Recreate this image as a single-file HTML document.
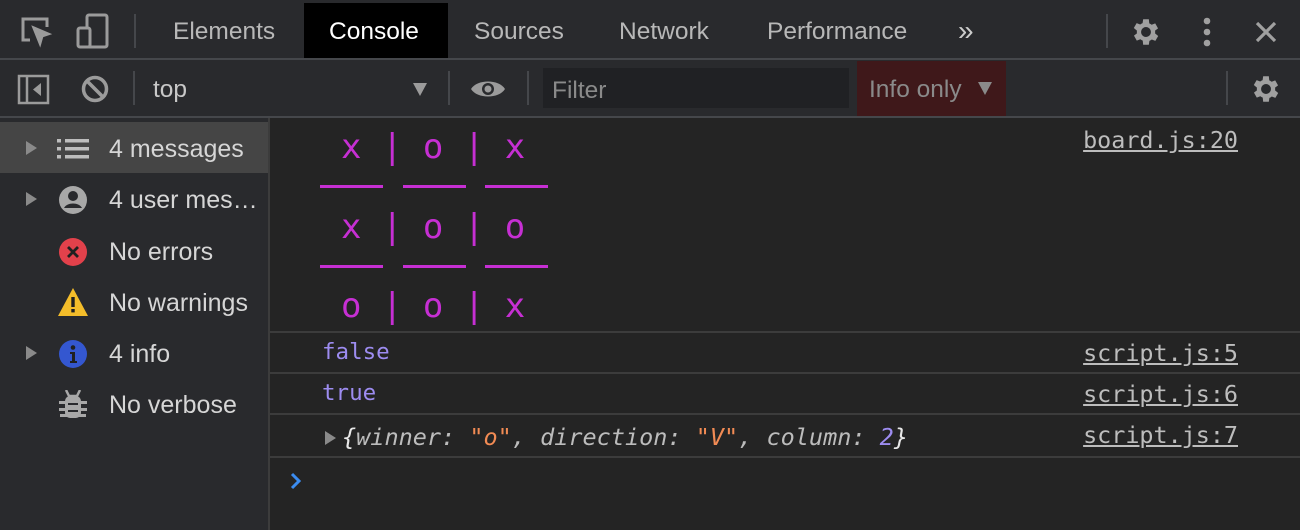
<!DOCTYPE html>
<html><head><meta charset="utf-8"><style>
*{margin:0;padding:0;box-sizing:border-box}
body{width:1300px;height:530px;background:#242424;font-family:"Liberation Sans",sans-serif;position:relative;overflow:hidden;color:#ccc}
.a{position:absolute;white-space:pre}
.mono{font-family:"DejaVu Sans Mono","Liberation Mono",monospace}
.tab{font-size:24.5px;color:#b8b8b8;top:18px}
.hl{position:absolute;left:0;width:1300px;height:2px;background:#45474b}
.cl{position:absolute;left:270px;width:1030px;height:2px;background:#3c3c3c}
.side{font-size:25px;color:#d6d6d6}
.tri{position:absolute;width:0;height:0;border-top:7px solid transparent;border-bottom:7px solid transparent;border-left:11px solid #8a8a8a}
.link{font-size:23.4px;color:#bdbdbd;text-decoration:underline;right:62px}
.b{font-size:34px;color:#c62fd3}
.ul{position:absolute;height:3px;background:#c62fd3}
</style></head><body>
<div class="a" style="left:0;top:0;width:1300px;height:59px;background:#292a2d"></div>
<div class="a" style="left:304px;top:3px;width:144px;height:56px;background:#000"></div>
<div class="hl" style="top:58px"></div>
<div class="a" style="left:0;top:60px;width:1300px;height:57px;background:#292a2d"></div>
<div class="hl" style="top:116px"></div>
<svg class="a" style="left:18px;top:14px" width="36" height="36" viewBox="0 0 36 36" fill="none" stroke="#9b9b9b" stroke-width="3"><path d="M12 26H5V5h24v8"/><path d="M16 14l14 6-6 2-2 7z" fill="#9b9b9b"/></svg>
<svg class="a" style="left:75px;top:13px" width="36" height="38" viewBox="0 0 36 38" fill="none" stroke="#9b9b9b" stroke-width="3"><rect x="12" y="2" width="20" height="32" rx="2"/><rect x="3" y="15" width="12" height="19" rx="2" fill="#292a2d"/></svg>
<div class="a" style="left:134px;top:14px;width:2px;height:34px;background:#45474b"></div>
<div class="a tab" style="left:173px">Elements</div>
<div class="a tab" style="left:329px;color:#fff">Console</div>
<div class="a tab" style="left:474px">Sources</div>
<div class="a tab" style="left:619px">Network</div>
<div class="a tab" style="left:767px">Performance</div>
<div class="a" style="left:958px;top:15px;font-size:28px;color:#ccc">»</div>
<div class="a" style="left:1106px;top:14px;width:2px;height:34px;background:#45474b"></div>
<svg class="a" style="left:1129px;top:15px" width="34" height="34" viewBox="0 0 24 24"><path fill="#a0a0a0" d="M19.4 13a7.5 7.5 0 000-2l2.1-1.6-2-3.5-2.5 1a7 7 0 00-1.7-1L15 3h-4l-.4 2.7a7 7 0 00-1.7 1l-2.5-1-2 3.5L6.6 11a7.5 7.5 0 000 2l-2.1 1.6 2 3.5 2.5-1a7 7 0 001.7 1L11 21h4l.4-2.7a7 7 0 001.7-1l2.5 1 2-3.5zM13 15.5a3.5 3.5 0 110-7 3.5 3.5 0 010 7z" transform="translate(-1 0)"/></svg>
<svg class="a" style="left:1200px;top:16px" width="14" height="32"><circle cx="7" cy="5" r="3.3" fill="#a0a0a0"/><circle cx="7" cy="16" r="3.3" fill="#a0a0a0"/><circle cx="7" cy="27" r="3.3" fill="#a0a0a0"/></svg>
<svg class="a" style="left:1254px;top:20px" width="24" height="24" stroke="#a0a0a0" stroke-width="3.2"><path d="M3 3L21 21M21 3L3 21"/></svg>
<svg class="a" style="left:17px;top:74px" width="34" height="32" fill="none" stroke="#9b9b9b" stroke-width="2.5"><rect x="2" y="2" width="29" height="27"/><path d="M10 2v27"/><path d="M24 9l-8 6.5 8 6.5z" fill="#9b9b9b" stroke="none"/></svg>
<svg class="a" style="left:80px;top:74px" width="30" height="30" fill="none" stroke="#9b9b9b" stroke-width="3.5"><circle cx="15" cy="15" r="11.5"/><path d="M7 7l16 16"/></svg>
<div class="a" style="left:133px;top:71px;width:2px;height:34px;background:#45474b"></div>
<div class="a" style="left:153px;top:76px;font-size:24.5px;color:#c8c8c8">top</div>
<div class="a" style="left:413px;top:83px;border-left:7px solid transparent;border-right:7px solid transparent;border-top:13px solid #9b9b9b"></div>
<div class="a" style="left:448px;top:71px;width:2px;height:34px;background:#45474b"></div>
<svg class="a" style="left:470px;top:76px" width="36" height="26"><path d="M1 13C7 3 29 3 35 13 29 23 7 23 1 13z" fill="#9b9b9b"/><circle cx="18" cy="13" r="6" fill="#292a2d"/><circle cx="18" cy="13" r="3.5" fill="#9b9b9b"/></svg>
<div class="a" style="left:527px;top:71px;width:2px;height:34px;background:#45474b"></div>
<div class="a" style="left:543px;top:68px;width:306px;height:40px;background:#202124"></div>
<div class="a" style="left:552px;top:77px;font-size:24.5px;color:#8a8a8a">Filter</div>
<div class="a" style="left:857px;top:61px;width:149px;height:55px;background:#3f181a"></div>
<div class="a" style="left:869px;top:76px;font-size:24.5px;color:#8a8a8a">Info only</div>
<div class="a" style="left:978px;top:82px;border-left:7px solid transparent;border-right:7px solid transparent;border-top:13px solid #8a8a8a"></div>
<div class="a" style="left:1226px;top:71px;width:2px;height:34px;background:#45474b"></div>
<svg class="a" style="left:1249px;top:72px" width="34" height="34" viewBox="0 0 24 24"><path fill="#a0a0a0" d="M19.4 13a7.5 7.5 0 000-2l2.1-1.6-2-3.5-2.5 1a7 7 0 00-1.7-1L15 3h-4l-.4 2.7a7 7 0 00-1.7 1l-2.5-1-2 3.5L6.6 11a7.5 7.5 0 000 2l-2.1 1.6 2 3.5 2.5-1a7 7 0 001.7 1L11 21h4l.4-2.7a7 7 0 001.7-1l2.5 1 2-3.5zM13 15.5a3.5 3.5 0 110-7 3.5 3.5 0 010 7z" transform="translate(-1 0)"/></svg>
<div class="a" style="left:0;top:118px;width:268px;height:412px;background:#292a2d"></div>
<div class="a" style="left:268px;top:118px;width:2px;height:412px;background:#3c3c3c"></div>
<div class="a" style="left:0;top:122px;width:268px;height:51px;background:#454545"></div>
<div class="tri" style="left:26px;top:141px"></div>
<svg class="a" style="left:57px;top:138px" width="32" height="22" fill="#bdbdbd"><rect x="0" y="1" width="4" height="3.5"/><rect x="8" y="1" width="24" height="3.5"/><rect x="0" y="9" width="4" height="3.5"/><rect x="8" y="9" width="24" height="3.5"/><rect x="0" y="17" width="4" height="3.5"/><rect x="8" y="17" width="24" height="3.5"/></svg>
<div class="a side" style="left:109px;top:135px">4 messages</div>
<div class="tri" style="left:26px;top:192px"></div>
<svg class="a" style="left:58px;top:185px" width="30" height="30"><circle cx="15" cy="15" r="14" fill="#a8a8a8"/><circle cx="15" cy="11" r="5" fill="#292a2d"/><path d="M6 23c3-6 15-6 18 0z" fill="#292a2d"/></svg>
<div class="a side" style="left:109px;top:186px">4 user mes…</div>
<svg class="a" style="left:58px;top:237px" width="30" height="30"><circle cx="15" cy="15" r="14" fill="#e2414b"/><path d="M10 10l10 10M20 10L10 20" stroke="#202020" stroke-width="2.8"/></svg>
<div class="a side" style="left:109px;top:238px">No errors</div>
<svg class="a" style="left:57px;top:287px" width="32" height="30"><path d="M16 1L31 29H1z" fill="#f4bd2a"/><rect x="14.3" y="10" width="3.4" height="10" fill="#202020"/><rect x="14.3" y="22" width="3.4" height="3.4" fill="#202020"/></svg>
<div class="a side" style="left:109px;top:289px">No warnings</div>
<div class="tri" style="left:26px;top:346px"></div>
<svg class="a" style="left:58px;top:339px" width="30" height="30"><circle cx="15" cy="15" r="14" fill="#3457d0"/><circle cx="15" cy="8.5" r="2.3" fill="#202020"/><path d="M12 13h5v9h2v2h-7v-2h2v-7h-2z" fill="#202020"/></svg>
<div class="a side" style="left:109px;top:340px">4 info</div>
<svg class="a" style="left:59px;top:390px" width="28" height="30" fill="#a8a8a8"><rect x="6" y="6" width="16" height="22" rx="5"/><rect x="0" y="11" width="28" height="3"/><rect x="0" y="18" width="28" height="3"/><rect x="1" y="24" width="26" height="3"/><path d="M7 0l3 6h8l3-6" stroke="#a8a8a8" stroke-width="2.5" fill="none"/><rect x="9" y="13" width="10" height="2" fill="#292a2d"/><rect x="9" y="20" width="10" height="2" fill="#292a2d"/></svg>
<div class="a side" style="left:109px;top:391px">No verbose</div>
<div class="a mono b" style="left:341px;top:127px">x | o | x</div>
<div class="a mono b" style="left:341px;top:207px">x | o | o</div>
<div class="a mono b" style="left:341px;top:286px">o | o | x</div>
<div class="ul" style="left:320px;top:185px;width:63px"></div>
<div class="ul" style="left:403px;top:185px;width:63px"></div>
<div class="ul" style="left:485px;top:185px;width:63px"></div>
<div class="ul" style="left:320px;top:265px;width:63px"></div>
<div class="ul" style="left:403px;top:265px;width:63px"></div>
<div class="ul" style="left:485px;top:265px;width:63px"></div>
<div class="a mono link" style="top:126px">board.js:20</div>
<div class="cl" style="top:331px"></div>
<div class="a mono" style="left:322px;top:339px;font-size:22.5px;color:#9d8cf0">false</div>
<div class="a mono link" style="top:339px">script.js:5</div>
<div class="cl" style="top:372px"></div>
<div class="a mono" style="left:322px;top:380px;font-size:22.5px;color:#9d8cf0">true</div>
<div class="a mono link" style="top:380px">script.js:6</div>
<div class="cl" style="top:413px"></div>
<div class="a" style="left:325px;top:431px;border-top:7px solid transparent;border-bottom:7px solid transparent;border-left:11px solid #8a8a8a"></div>
<div class="a mono" style="left:342px;top:423px;font-size:23.5px;font-style:italic;color:#bcbcbc"><span style="color:#e8e8e8">{</span>winner: <span style="color:#f28b54">"o"</span>, direction: <span style="color:#f28b54">"V"</span>, column: <span style="color:#9d8cf0">2</span><span style="color:#e8e8e8">}</span></div>
<div class="a mono link" style="top:421px">script.js:7</div>
<div class="cl" style="top:456px"></div>
<svg class="a" style="left:289px;top:472px" width="14" height="18" fill="none" stroke="#3b8cf0" stroke-width="3"><path d="M3 2l7 7-7 7"/></svg>
</body></html>
